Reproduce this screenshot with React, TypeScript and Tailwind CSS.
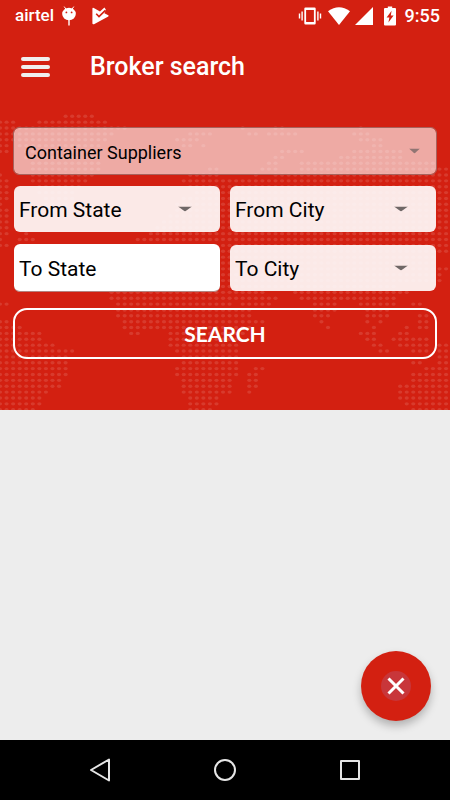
import type { ReactNode } from "react";

// Dotted world map: one entry per row, each pair is [first column, last column]
const MAP_ROWS: number[][][] = [
  [[10, 14]],
  [[0, 2], [6, 16]],
  [[0, 2], [3, 19], [37, 37], [42, 43], [55, 55]],
  [[0, 17], [29, 32], [38, 39], [41, 45], [54, 56]],
  [[0, 16], [27, 30], [55, 58]],
  [[0, 1], [3, 15], [28, 29], [31, 31], [57, 58]],
  [[0, 1], [4, 14], [43, 46], [54, 61]],
  [[4, 15], [42, 43], [52, 61]],
  [[5, 15], [41, 42], [46, 66]],
  [[5, 15], [32, 33], [40, 42], [46, 68]],
  [[0, 0], [5, 14], [29, 33], [39, 39], [42, 68]],
  [[0, 1], [5, 13], [28, 68]],
  [[0, 1], [6, 12], [29, 68]],
  [[0, 1], [6, 11], [30, 68]],
  [[0, 1], [7, 11], [28, 68]],
  [[0, 0], [7, 10], [27, 68]],
  [[0, 1], [8, 10], [27, 68]],
  [[0, 1], [26, 68]],
  [[0, 1], [25, 68]],
  [[0, 1], [24, 68]],
  [[0, 1], [4, 4], [23, 68]],
  [[0, 0], [3, 5], [21, 68]],
  [[0, 1], [34, 68]],
  [[34, 68]],
  [[34, 66]],
  [[34, 66]],
  [[34, 68]],
  [[34, 67]],
  [[34, 67]],
  [[34, 60]],
  [[17, 40], [45, 62]],
  [[17, 42], [46, 60]],
  [[0, 1], [18, 35], [37, 41], [48, 51], [55, 60], [63, 64]],
  [[18, 38], [48, 51], [56, 59]],
  [[18, 38], [48, 50], [56, 59], [64, 65]],
  [[0, 1], [19, 40], [49, 49], [56, 56], [58, 58], [64, 65]],
  [[0, 3], [19, 25], [26, 38], [50, 50], [57, 57], [62, 62], [64, 65]],
  [[0, 6], [20, 21], [26, 37], [55, 57], [61, 62]],
  [[0, 6], [26, 36], [56, 57], [60, 65]],
  [[0, 8], [26, 36], [57, 58], [61, 65], [67, 68]],
  [[0, 11], [27, 36], [58, 59], [63, 65], [67, 68]],
  [[0, 10], [28, 36], [67, 68]],
  [[0, 10], [28, 36], [63, 64], [67, 68]],
  [[0, 10], [27, 36], [39, 40], [65, 68]],
  [[0, 10], [27, 36], [38, 39], [63, 68]],
  [[0, 9], [28, 35], [38, 39], [63, 68]],
  [[0, 9], [28, 35], [38, 39], [61, 68]],
  [[0, 7], [28, 35], [38, 38], [61, 68]],
  [[0, 6], [29, 33], [61, 68]],
  [[0, 6], [29, 33], [62, 68]],
  [[0, 5], [29, 32], [63, 68]],
];

const DOT_X = 6.56;
const DOT_Y = 5.868;

const WorldMap = () => (
  <svg
    aria-hidden="true"
    className="absolute inset-0 h-full w-full"
    viewBox="0 0 450 410"
    preserveAspectRatio="xMidYMax slice"
    fill="#ffffff"
    fillOpacity="0.12"
  >
    {MAP_ROWS.map((row, y) =>
      row.map(([from, to]) =>
        Array.from({ length: to - from + 1 }, (_, i) => (
          <ellipse
            key={`${y}-${from + i}`}
            cx={(from + i) * DOT_X}
            cy={116.3 + y * DOT_Y}
            rx="2.1"
            ry="1.7"
          />
        ))
      )
    )}
  </svg>
);

const StatusBar = () => (
  <div className="flex h-8 items-center justify-between pl-[15px] pr-[10px] font-medium">
    <div className="flex items-center">
      <span className="text-[17px]">airtel</span>
      <svg className="ml-2 h-5 w-[14px]" viewBox="0 0 14 20" fill="#fff">
        <path d="M2.2 0.6 4 3.2M11.8 0.6 10 3.2" stroke="#fff" strokeWidth="1" />
        <ellipse cx="7" cy="8" rx="6.8" ry="6.2" />
        <path d="M6.3 13h1.4v6.6H6.3z" />
        <circle cx="4.4" cy="6.4" r="0.9" fill="#d32011" />
        <circle cx="9.6" cy="6.4" r="0.9" fill="#d32011" />
      </svg>
      <svg className="ml-4 h-[18px] w-[17px]" viewBox="0 0 17 18" fill="#fff">
        <path d="M0.4 1.8Q0.4 0.4 1.8 1.1L8 4.6 12.4 0.6 13.8 2.4 12.4 6.2 16.3 8.3Q17 8.9 16.3 9.5L2 17.2Q0.4 17.8 0.4 16.2z" />
        <path d="M4.2 6.8 7 9.6 13.4 3.4" fill="none" stroke="#d32011" strokeWidth="1.6" />
      </svg>
    </div>
    <div className="flex items-center">
      <svg className="h-[18px] w-6" viewBox="0 0 24 18" fill="#fff">
        <path d="M7.5 0.5h9Q17.7 0.5 17.7 1.7v14.6Q17.7 17.5 16.5 17.5h-9Q6.3 17.5 6.3 16.3V1.7Q6.3 0.5 7.5 0.5zM8.1 3v12h7.8V3z" fillRule="evenodd" />
        <path d="M3.4 4.5h1.4v9H3.4zM0.8 6.6h1.4v5H0.8zM19.2 4.5h1.4v9h-1.4zM21.8 6.6h1.4v5h-1.4z" />
      </svg>
      <svg className="ml-[6px] h-[18px] w-[22px]" viewBox="0 0 22 18" fill="#fff">
        <path d="M0 4.2Q11-3.8 22 4.2L11 18z" />
      </svg>
      <svg className="ml-[5px] h-[18px] w-[18px]" viewBox="0 0 18 18" fill="#fff">
        <path d="M18 0v18H0z" />
      </svg>
      <svg className="ml-[11px] h-5 w-3" viewBox="0 0 12 20" fill="#fff">
        <path d="M1 2h2.8V0.4h4.4V2H11q1 0 1 1v15.4q0 1-1 1H1q-1 0-1-1V3q0-1 1-1zM7.6 4.8 2.6 11.6H5.4L4.4 16.6 9.6 9.6H6.8z" fillRule="evenodd" />
      </svg>
      <span className="ml-[9px] text-lg">9:55</span>
    </div>
  </div>
);

type SelectProps = {
  label: string;
  className: string;
  arrowClassName: string;
};

const SelectField = ({ label, className, arrowClassName }: SelectProps) => (
  <div className="relative">
    <select
      aria-label={label}
      className={`block w-full appearance-none rounded-md pt-[3px] text-black outline-none ${className}`}
    >
      <option>{label}</option>
    </select>
    <svg
      className={`pointer-events-none absolute top-1/2 -translate-y-1/2 ${arrowClassName}`}
      viewBox="0 0 14 6"
      preserveAspectRatio="none"
      fill="currentColor"
    >
      <path d="M0 0h14L7 6z" />
    </svg>
  </div>
);

const fieldClass = "h-[46px] bg-white/90 pl-[5px] text-[21px]";
const fieldArrowClass = "right-7 h-[5px] w-[14px] text-[#6f6766]";

const NavButton = ({ label, children }: { label: string; children: ReactNode }) => (
  <button type="button" aria-label={label} className="flex items-center justify-center">
    <svg
      className="h-6 w-6"
      viewBox="0 0 24 24"
      fill="none"
      stroke="#e6e6e6"
      strokeWidth="2"
      strokeLinejoin="round"
    >
      {children}
    </svg>
  </button>
);

export default function App() {
  return (
    <div className="flex min-h-screen flex-col bg-[#ededed] font-['Roboto',sans-serif]">
      <header className="relative bg-[#d32011] pb-[51px] text-white">
        <WorldMap />
        <div className="relative">
          <StatusBar />

          <div className="flex h-[70px] items-center pl-[21px]">
            <button type="button" aria-label="Menu" className="flex flex-col gap-1">
              <span className="h-1 w-[29px] rounded-sm bg-[#f0eeee]" />
              <span className="h-1 w-[29px] rounded-sm bg-[#f0eeee]" />
              <span className="h-1 w-[29px] rounded-sm bg-[#f0eeee]" />
            </button>
            <h1 className="ml-10 text-[25px] font-medium">Broker search</h1>
          </div>

          <form className="mt-[25px] px-[13px]" onSubmit={(e) => e.preventDefault()}>
            <SelectField
              label="Container Suppliers"
              className="h-12 border border-[#a8625c] bg-white/62 bg-clip-padding pl-[11px] text-[18px]"
              arrowClassName="right-[17px] h-[5px] w-[11px] text-[#917573]"
            />

            <div className="mx-px mt-[11px] grid grid-cols-2 items-center gap-x-[10px] gap-y-3">
              <SelectField
                label="From State"
                className={fieldClass}
                arrowClassName={fieldArrowClass}
              />
              <SelectField
                label="From City"
                className={fieldClass}
                arrowClassName={fieldArrowClass}
              />
              <input
                aria-label="To State"
                placeholder="To State"
                className="h-12 w-full rounded-md border-b border-[#b3827e] bg-white pl-[5px] pt-[3px] text-[21px] text-black outline-none placeholder:text-black"
              />
              <SelectField
                label="To City"
                className={fieldClass}
                arrowClassName={fieldArrowClass}
              />
            </div>

            <button
              type="submit"
              className="mt-4 h-[51px] w-full rounded-[14px] border-2 border-white font-['Lato',sans-serif] text-[21px] font-bold"
            >
              SEARCH
            </button>
          </form>
        </div>
      </header>

      <main className="relative flex-1">
        <button
          type="button"
          aria-label="Close"
          className="absolute bottom-[19px] right-[19px] flex h-[70px] w-[70px] items-center justify-center rounded-full bg-[#d32011] shadow-[0_5px_8px_rgba(0,0,0,0.25)]"
        >
          <span className="flex h-[30px] w-[30px] items-center justify-center rounded-full bg-[#c8363a]">
            <svg className="h-[18px] w-[18px]" viewBox="0 0 18 18" stroke="#fff" strokeWidth="3">
              <path d="M1.5 1.5l15 15M16.5 1.5l-15 15" />
            </svg>
          </span>
        </button>
      </main>

      <nav className="flex h-[60px] justify-center bg-black">
        <div className="grid w-5/6 grid-cols-3">
          <NavButton label="Back">
            <path d="M21 1.5v21L3 12z" />
          </NavButton>
          <NavButton label="Home">
            <circle cx="12" cy="12" r="10" />
          </NavButton>
          <NavButton label="Recent apps">
            <path d="M3 3h18v18H3z" />
          </NavButton>
        </div>
      </nav>
    </div>
  );
}
